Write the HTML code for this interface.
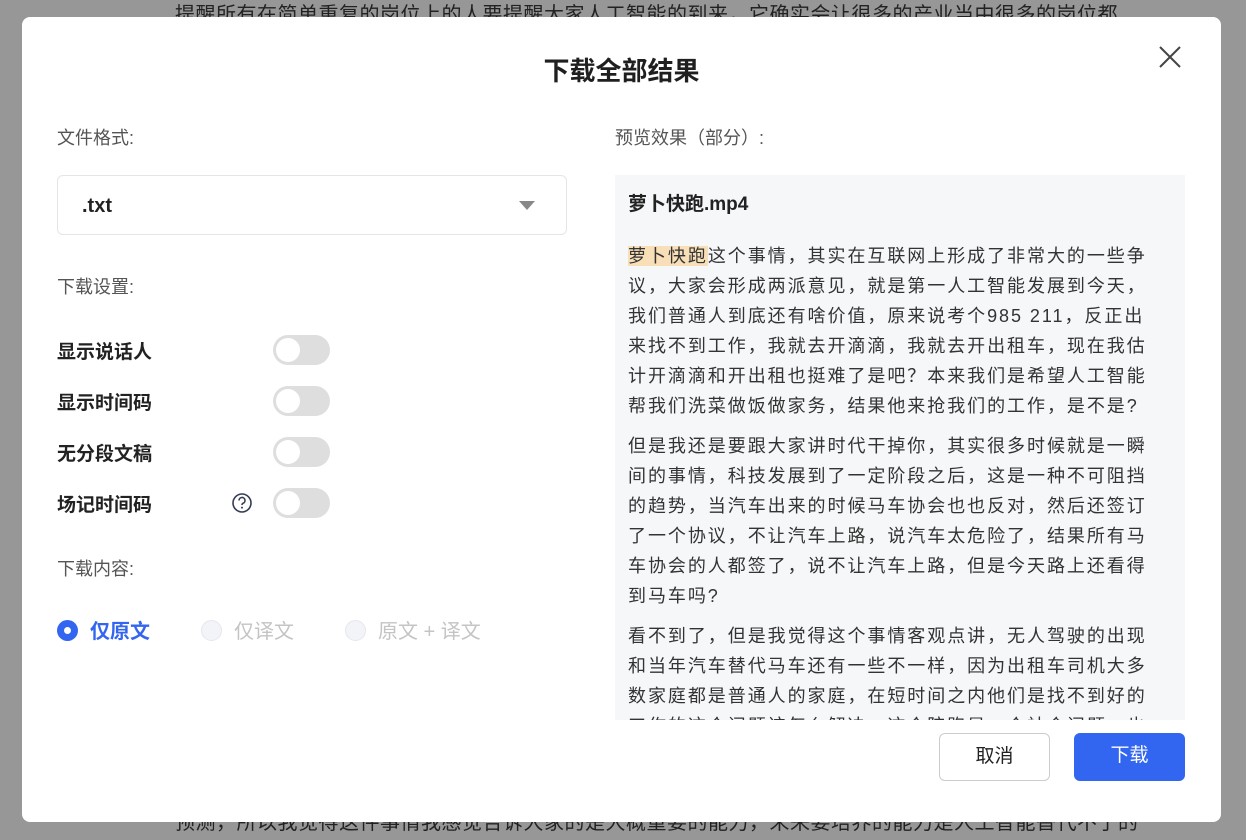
<!DOCTYPE html>
<html><head><meta charset="utf-8">
<style>
*{margin:0;padding:0;box-sizing:border-box}
body{width:1246px;height:840px;overflow:hidden;background:#979797;font-family:"Liberation Sans","Noto Sans CJK SC",sans-serif;position:relative}
.bg{position:absolute;left:175px;color:#222;font-size:20px;white-space:nowrap;letter-spacing:0.5px}
.modal{position:absolute;left:22px;top:17px;width:1199px;height:805px;background:#fff;border-radius:8px}
.abs{position:absolute;white-space:nowrap}
.title{left:0;width:100%;text-align:center;top:34px;font-size:26px;font-weight:bold;color:#1f1f1f}
.lbl{font-size:18px;color:#555}
.sel{left:35px;top:158px;width:510px;height:60px;border:1px solid #e5e5e5;border-radius:6px}
.sel span{position:absolute;left:24px;top:19px;font-size:20px;color:#222;font-weight:bold}
.sel i{position:absolute;right:31px;top:25px;width:0;height:0;border-left:8px solid transparent;border-right:8px solid transparent;border-top:9px solid #888}
.opt{font-size:19px;font-weight:bold;color:#222}
.tg{width:57px;height:30px;border-radius:15px;background:#dedede}
.tg::after{content:"";position:absolute;left:3px;top:3px;width:24px;height:24px;border-radius:50%;background:#fff}
.prev{left:593px;top:158px;width:570px;height:545px;background:#f6f7f9;overflow:hidden}
.prev .h{position:absolute;left:13px;top:14px;font-size:19px;font-weight:bold;color:#222}
.prev .t{position:absolute;left:13px;top:66px;font-size:18px;line-height:30px;color:#333;letter-spacing:1.95px;white-space:nowrap}
.prev p{margin-bottom:10px}
.hl{background:#f8dfb8}
.btn{top:716px;height:48px;border-radius:6px;font-size:19px;text-align:center;line-height:46px}
</style></head><body>
<div class="bg" style="top:-2px">提醒所有在简单重复的岗位上的人要提醒大家人工智能的到来，它确实会让很多的产业当中很多的岗位都</div>
<div class="bg" style="top:806px">预测，所以我觉得这件事情我感觉告诉大家的是大概重要的能力，未来要培养的能力是人工智能替代不了的</div>
<div class="modal">
  <div class="abs title">下载全部结果</div>
  <svg class="abs" style="left:1136px;top:28px" width="24" height="24" viewBox="0 0 24 24"><path d="M2 2L22 22M22 2L2 22" stroke="#444" stroke-width="2" fill="none"/></svg>
  <div class="abs lbl" style="left:35px;top:107px">文件格式:</div>
  <div class="abs sel"><span>.txt</span><i></i></div>
  <div class="abs lbl" style="left:35px;top:256px">下载设置:</div>
  <div class="abs opt" style="left:35px;top:320px">显示说话人</div>
  <div class="abs tg" style="left:251px;top:318px"></div>
  <div class="abs opt" style="left:35px;top:371px">显示时间码</div>
  <div class="abs tg" style="left:251px;top:369px"></div>
  <div class="abs opt" style="left:35px;top:422px">无分段文稿</div>
  <div class="abs tg" style="left:251px;top:420px"></div>
  <div class="abs opt" style="left:35px;top:473px">场记时间码</div>
  <svg class="abs" style="left:209px;top:475px" width="22" height="22" viewBox="0 0 22 22"><circle cx="11" cy="11" r="9" stroke="#333d55" stroke-width="1.6" fill="none"/><path d="M8 8.5a3 3 0 1 1 4 2.8c-.8.4-1 .9-1 1.7" stroke="#333d55" stroke-width="1.6" fill="none"/><circle cx="11" cy="15.6" r="1" fill="#333d55"/></svg>
  <div class="abs tg" style="left:251px;top:471px"></div>
  <div class="abs lbl" style="left:35px;top:538px">下载内容:</div>
  <div class="abs" style="left:35px;top:603px;width:21px;height:21px;border-radius:50%;background:#3366f0"><div style="position:absolute;left:7px;top:7px;width:7px;height:7px;border-radius:50%;background:#fff"></div></div>
  <div class="abs" style="left:68px;top:598px;font-size:20px;font-weight:bold;color:#3366f0">仅原文</div>
  <div class="abs" style="left:179px;top:603px;width:21px;height:21px;border-radius:50%;background:#f2f4f8;border:1px solid #e4e7ee"></div>
  <div class="abs" style="left:212px;top:598px;font-size:20px;color:#c4c4c4">仅译文</div>
  <div class="abs" style="left:323px;top:603px;width:21px;height:21px;border-radius:50%;background:#f2f4f8;border:1px solid #e4e7ee"></div>
  <div class="abs" style="left:356px;top:598px;font-size:20px;color:#c4c4c4">原文 + 译文</div>

  <div class="abs lbl" style="left:593px;top:107px">预览效果（部分）:</div>
  <div class="abs prev">
    <div class="h">萝卜快跑.mp4</div>
    <div class="t">
      <p><span class="hl">萝卜快跑</span>这个事情，其实在互联网上形成了非常大的一些争<br>议，大家会形成两派意见，就是第一人工智能发展到今天，<br>我们普通人到底还有啥价值，原来说考个985 211，反正出<br>来找不到工作，我就去开滴滴，我就去开出租车，现在我估<br>计开滴滴和开出租也挺难了是吧？本来我们是希望人工智能<br>帮我们洗菜做饭做家务，结果他来抢我们的工作，是不是?</p>
      <p>但是我还是要跟大家讲时代干掉你，其实很多时候就是一瞬<br>间的事情，科技发展到了一定阶段之后，这是一种不可阻挡<br>的趋势，当汽车出来的时候马车协会也也反对，然后还签订<br>了一个协议，不让汽车上路，说汽车太危险了，结果所有马<br>车协会的人都签了，说不让汽车上路，但是今天路上还看得<br>到马车吗?</p>
      <p>看不到了，但是我觉得这个事情客观点讲，无人驾驶的出现<br>和当年汽车替代马车还有一些不一样，因为出租车司机大多<br>数家庭都是普通人的家庭，在短时间之内他们是找不到好的<br>工作的这个问题该怎么解决，这个陪跑是一个社会问题，也</p>
    </div>
  </div>
  <div class="abs btn" style="left:917px;width:111px;border:1px solid #ccc;color:#222">取消</div>
  <div class="abs btn" style="left:1052px;width:111px;background:#3366f0;color:#fff">下载</div>
</div>
</body></html>
